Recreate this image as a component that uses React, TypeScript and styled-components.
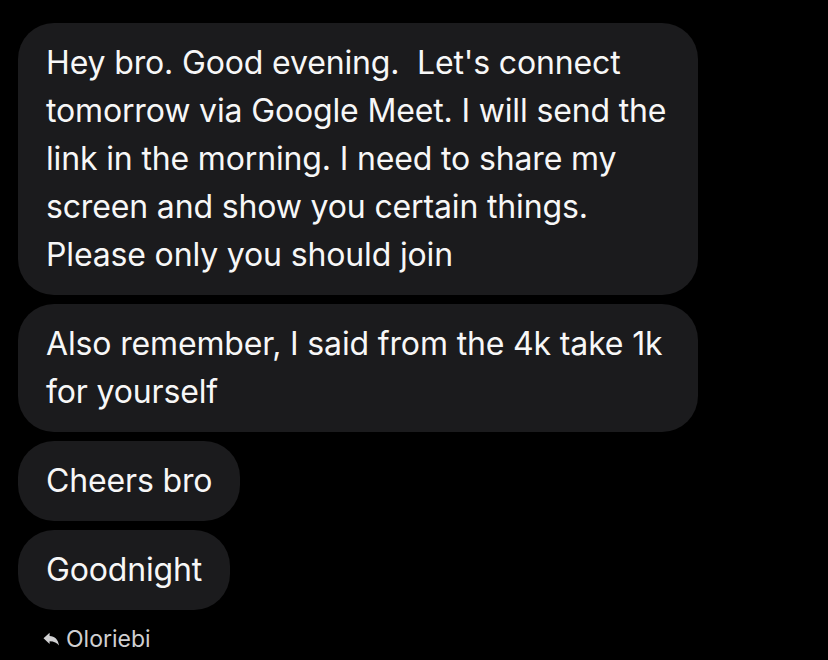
import styled, { createGlobalStyle } from "styled-components";

const messages = [
  "Hey bro. Good evening.\u00a0 Let's connect tomorrow via Google Meet. I will send the link in the morning. I need to share my screen and show you certain things. Please only you should join",
  "Also remember, I said from the 4k take 1k for yourself",
  "Cheers bro",
  "Goodnight",
];

const GlobalStyle = createGlobalStyle`
  html, body {
    margin: 0;
    padding: 0;
    background: #000;
  }
  body {
    font-family: Inter, "Noto Sans", sans-serif;
    -webkit-font-smoothing: antialiased;
  }
`;

function ReplyIcon() {
  return (
    <svg width="17" height="15" viewBox="0 0 17 15" fill="currentColor">
      <path d="M0.5 6.2 L6.6 0.8 L6.6 4.1 C11.8 4.3 15.2 7.6 16 13.6 C14.2 10.8 11 9.2 6.6 9.2 L6.6 12 Z" />
    </svg>
  );
}

function App() {
  return (
    <>
      <GlobalStyle />
      <Thread>
        {messages.map((text, index) => (
          <Bubble key={index}>{text}</Bubble>
        ))}
        <Sender>
          <ReplyIcon />
          <SenderName>Oloriebi</SenderName>
        </Sender>
      </Thread>
    </>
  );
}

export default App;

const Thread = styled.div`
  width: 828px;
  height: 660px;
  box-sizing: border-box;
  padding: 23px 0 0 18px;
  display: flex;
  flex-direction: column;
  align-items: flex-start;
  gap: 9px;
  background: #000;
`;

const Bubble = styled.div`
  max-width: 680px;
  box-sizing: border-box;
  padding: 16px 28px;
  border-radius: 36px;
  background: #1b1b1d;
  color: #f7f7f7;
  font-size: 32px;
  line-height: 48px;
  letter-spacing: -0.15px;
`;

const Sender = styled.div`
  display: flex;
  align-items: center;
  gap: 6px;
  margin: 6px 0 0 25px;
  color: #d0d0d2;
`;

const SenderName = styled.span`
  font-size: 23px;
  line-height: 28px;
`;
